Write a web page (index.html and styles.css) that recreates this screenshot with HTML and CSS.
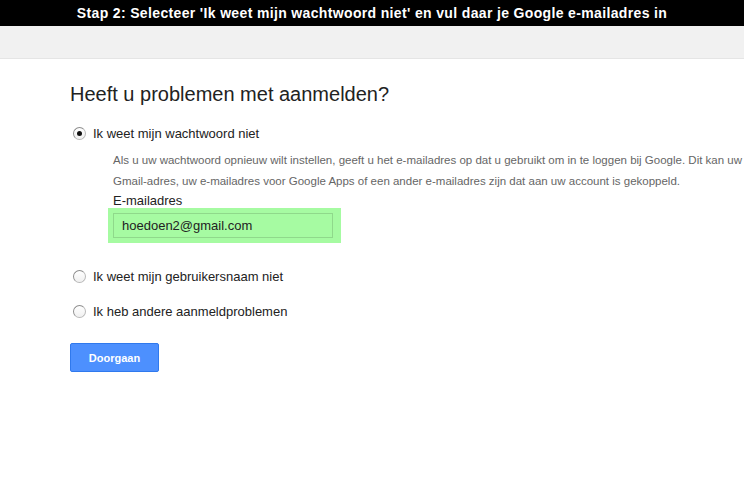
FILE: index.html
```html
<!DOCTYPE html>
<html lang="nl">
<head>
  <meta charset="UTF-8" />
  <title>Stap 2</title>
  <link rel="stylesheet" href="styles.css">
</head>
<body>
  <div class="caption">Stap 2: Selecteer 'Ik weet mijn wachtwoord niet' en vul daar je Google e-mailadres in</div>
  <div class="topbar"></div>

  <div class="content">
    <h1>Heeft u problemen met aanmelden?</h1>

    <label class="option">
      <span class="radio checked"></span>
      Ik weet mijn wachtwoord niet
    </label>
    <div class="details">
      <p>Als u uw wachtwoord opnieuw wilt instellen, geeft u het e-mailadres op dat u gebruikt om in te loggen bij Google. Dit kan uw Gmail-adres, uw e-mailadres voor Google Apps of een ander e-mailadres zijn dat aan uw account is gekoppeld.</p>
      <div class="field-label">E-mailadres</div>
      <div class="highlight">
        <input type="text" class="email" value="hoedoen2@gmail.com" />
      </div>
    </div>

    <label class="option">
      <span class="radio"></span>
      Ik weet mijn gebruikersnaam niet
    </label>
    <label class="option">
      <span class="radio"></span>
      Ik heb andere aanmeldproblemen
    </label>

    <button class="continue">Doorgaan</button>
  </div>
</body>
</html>
```

FILE: styles.css
```css
body {
  margin: 0;
  background: #fff;
  font-family: 'Liberation Sans', Arial, sans-serif;
  color: #222;
}
.caption {
  background: #000;
  color: #fff;
  font-weight: bold;
  font-size: 14px;
  letter-spacing: 0.35px;
  height: 26px;
  line-height: 26px;
  text-align: center;
  white-space: nowrap;
}
.topbar {
  height: 32px;
  background: #f1f1f1;
  border-bottom: 1px solid #e5e5e5;
}
.content {
  padding: 0 0 0 70px;
}
h1 {
  margin: 22px 0 0;
  font-size: 20px;
  font-weight: normal;
  line-height: 26px;
  color: #222;
}
.option {
  display: flex;
  align-items: center;
  gap: 7px;
  font-size: 13px;
  height: 16px;
  margin-top: 18px;
  padding-left: 3px;
  cursor: pointer;
}
.details + .option {
  margin-top: 25px;
}
.option + .option {
  margin-top: 19px;
}
.radio {
  width: 11px;
  height: 11px;
  border: 1px solid #b8b8b8;
  border-left-color: #8e8e8e;
  border-top-color: #8e8e8e;
  border-radius: 50%;
  background: linear-gradient(#fff, #f0f0f0);
  position: relative;
}
.radio.checked::after {
  content: '';
  position: absolute;
  left: 3px;
  top: 3px;
  width: 5px;
  height: 5px;
  border-radius: 50%;
  background: #111;
}
.details {
  padding-left: 43px;
  margin-top: 9px;
}
.details p {
  margin: 0;
  font-size: 11.5px;
  line-height: 21px;
  color: #666;
}
.field-label {
  font-size: 13px;
  line-height: 14px;
  margin-top: 2px;
}
.highlight {
  display: inline-block;
  background: #a6fba2;
  padding: 5px 8px 5px 5px;
  margin-left: -5px;
}
.email {
  display: block;
  width: 220px;
  height: 25px;
  box-sizing: border-box;
  border: 1px solid #8fd98b;
  background: #a6fba2;
  font-family: 'Liberation Sans', Arial, sans-serif;
  font-size: 13px;
  color: #222;
  padding: 0 8px;
  margin: 0;
}
.continue {
  display: block;
  margin-top: 24px;
  height: 29px;
  width: 89px;
  background: #4d90fe;
  border: 1px solid #3079ed;
  border-radius: 2px;
  color: #fff;
  font-family: 'Liberation Sans', Arial, sans-serif;
  font-weight: bold;
  font-size: 11px;
  cursor: pointer;
}
```
